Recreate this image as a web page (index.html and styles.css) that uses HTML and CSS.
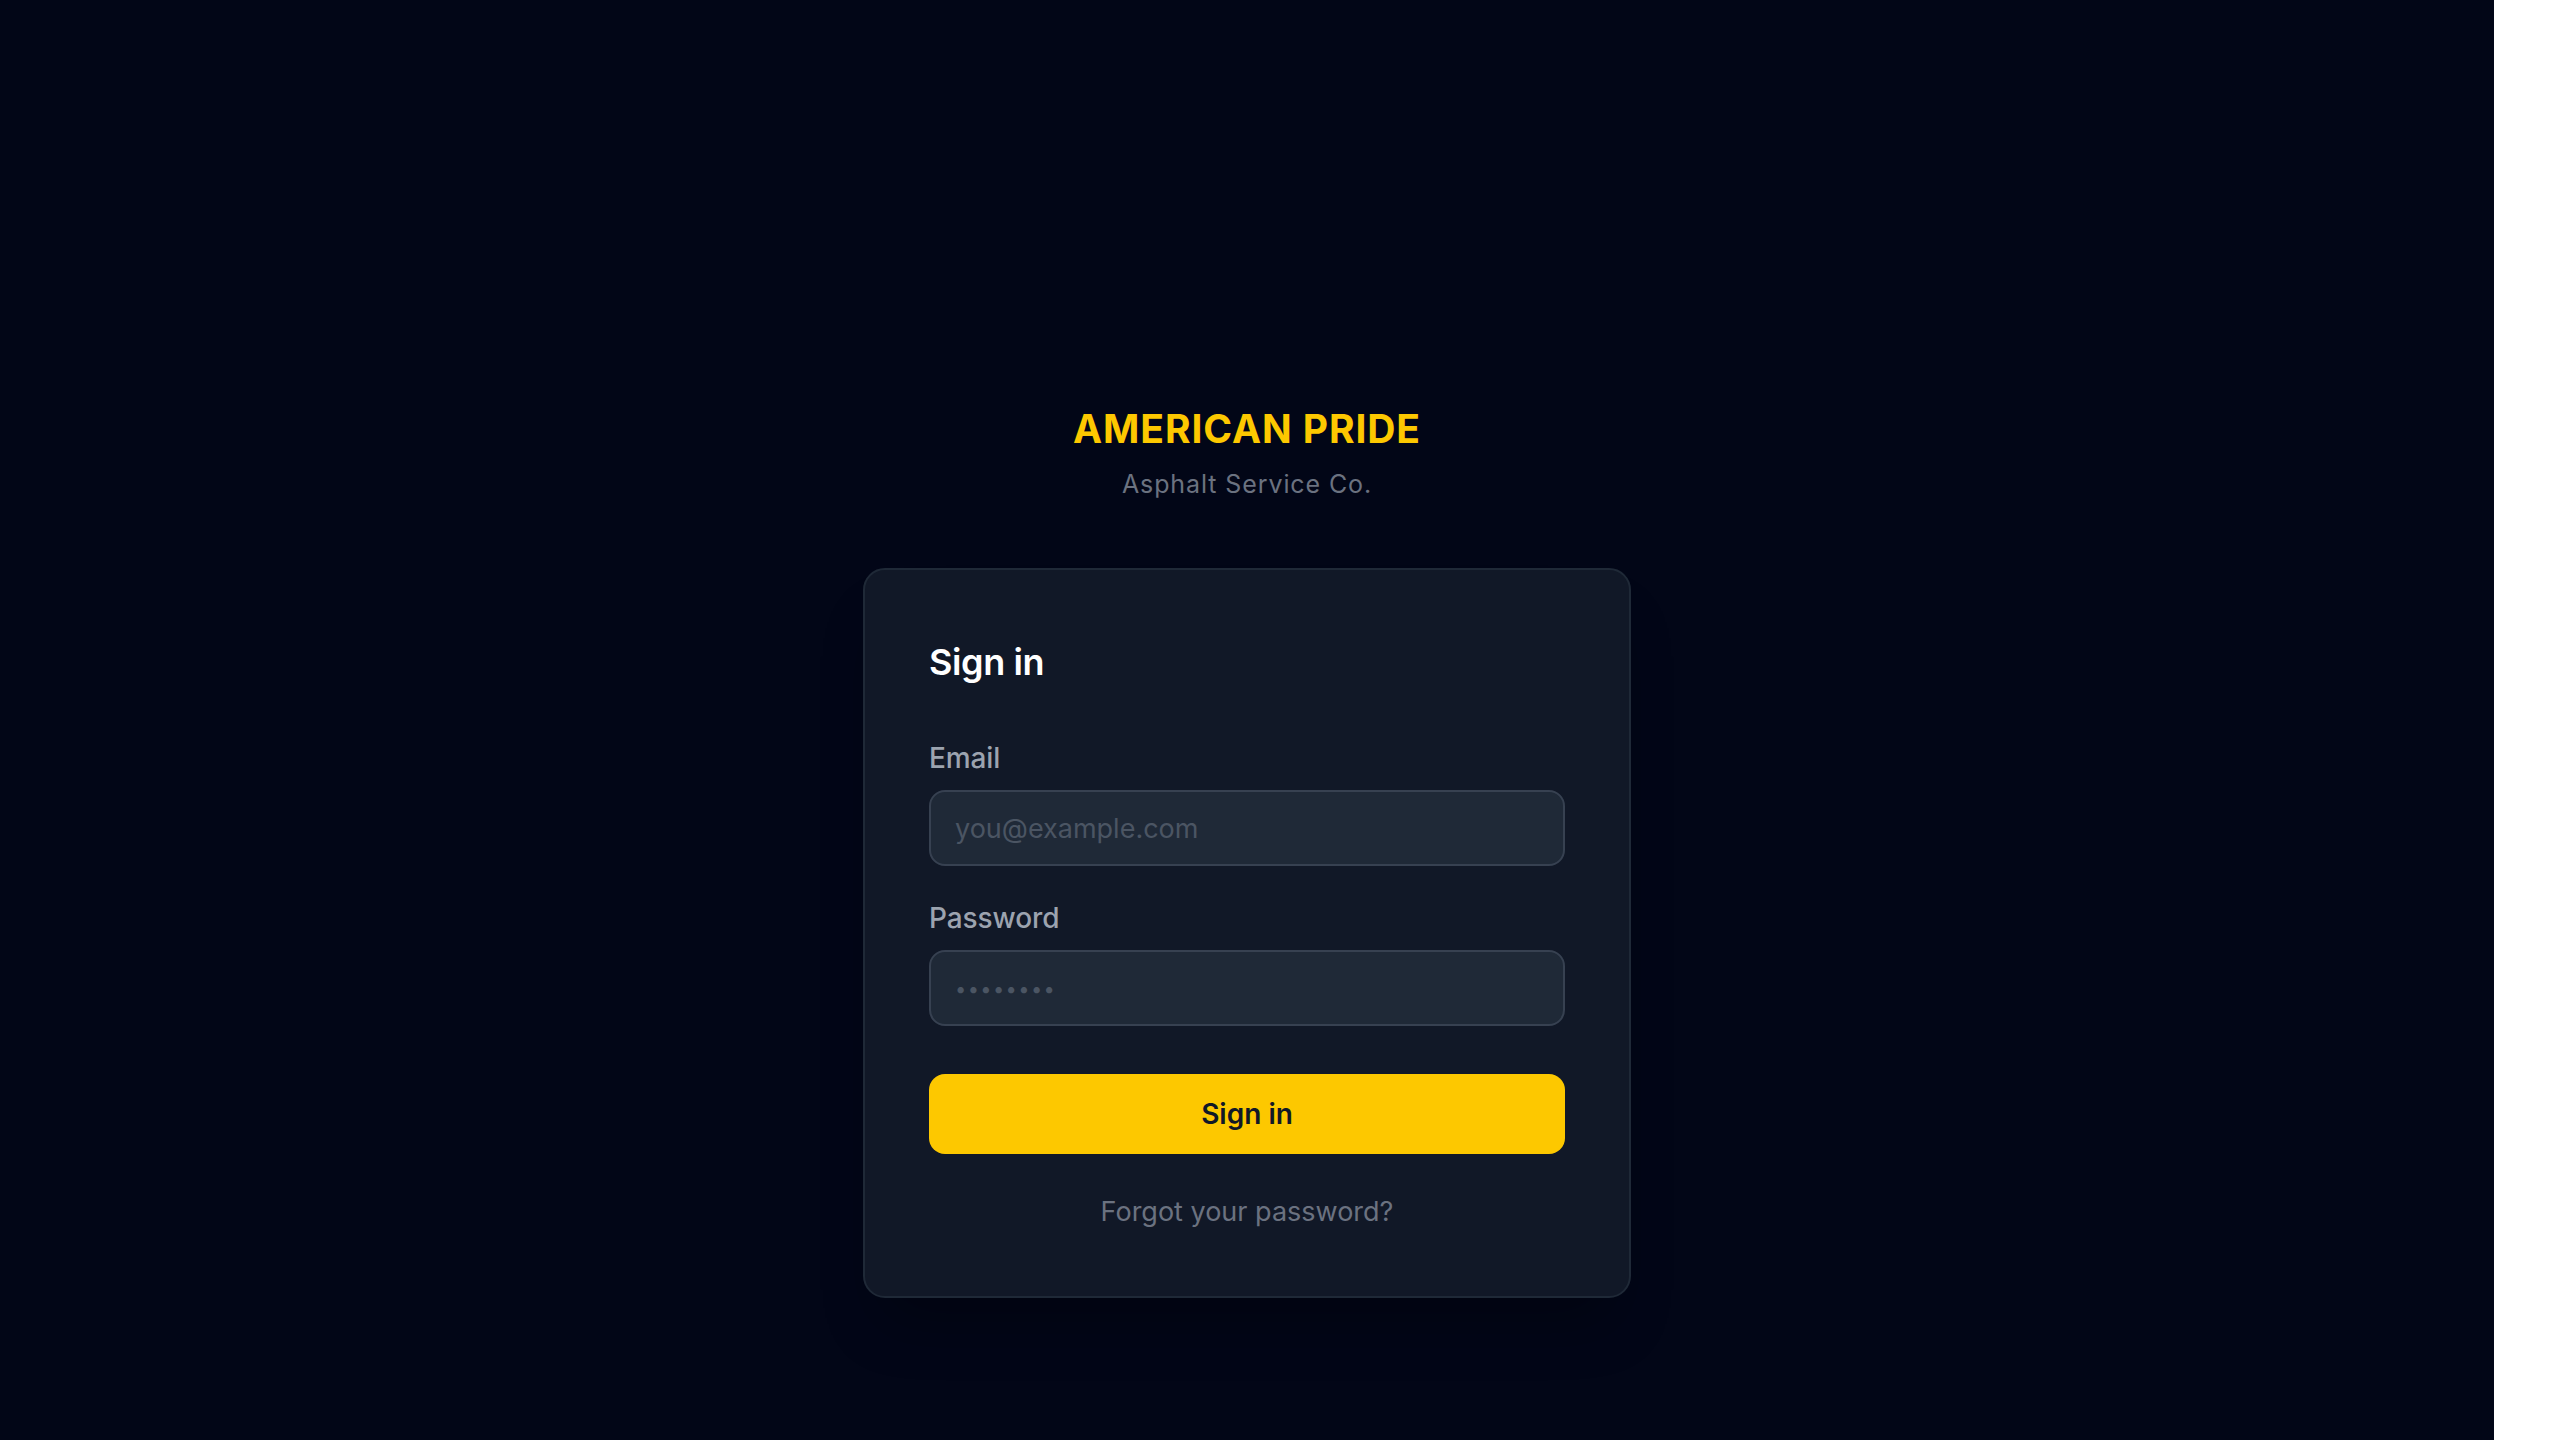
FILE: index.html
```html
<!DOCTYPE html>
<html lang="en">
<head>
<meta charset="utf-8">
<title>American Pride – Sign in</title>
<link rel="stylesheet" href="styles.css">
</head>
<body>
<div class="page">
  <main class="wrap">
    <header class="brand">
      <h1 class="brand-title">AMERICAN PRIDE</h1>
      <p class="brand-sub">Asphalt Service Co.</p>
    </header>
    <section class="card">
      <h2 class="card-title">Sign in</h2>
      <form class="form">
        <div class="field">
          <label class="label" for="email">Email</label>
          <input class="input" id="email" type="email" placeholder="you@example.com">
        </div>
        <div class="field">
          <label class="label" for="password">Password</label>
          <input class="input input-password" id="password" type="password" placeholder="••••••••">
        </div>
        <button class="btn" type="button">Sign in</button>
      </form>
      <div class="forgot-row"><a class="forgot" href="#">Forgot your password?</a></div>
    </section>
  </main>
</div>
</body>
</html>
```

FILE: styles.css
```css
html, body {
  margin: 0;
  padding: 0;
  background: #ffffff;
}
* { box-sizing: border-box; }

.page {
  width: 2494px;
  min-height: 1440px;
  background: #020617;
  font-family: Inter, "Noto Sans", "Liberation Sans", sans-serif;
  display: flex;
  justify-content: center;
  padding-top: 401px;
}

.wrap {
  width: 768px;
  display: flex;
  flex-direction: column;
  align-items: stretch;
}

.brand {
  text-align: center;
}
.brand-title {
  margin: 0;
  font-size: 39px;
  line-height: 56px;
  font-weight: 700;
  color: #fdc800;
  letter-spacing: 0.9px;
}
.brand-sub {
  margin: 11px 0 0;
  font-size: 25px;
  line-height: 32px;
  color: #6b7280;
  letter-spacing: 0.9px;
}

.card {
  margin-top: 68px;
  background: #111827;
  border: 2px solid #1f2937;
  border-radius: 22px;
  padding: 64px;
  box-shadow: 0 40px 60px -20px rgba(0, 0, 0, 0.3);
}

.card-title {
  margin: 0;
  font-size: 36px;
  line-height: 56px;
  font-weight: 600;
  color: #ffffff;
  letter-spacing: -0.4px;
}

.form {
  margin-top: 48px;
  display: flex;
  flex-direction: column;
  gap: 32px;
}

.field {
  display: flex;
  flex-direction: column;
  gap: 12px;
}

.label {
  font-size: 28px;
  line-height: 40px;
  font-weight: 500;
  color: #9ca3af;
  letter-spacing: -0.1px;
}

.input {
  height: 76px;
  width: 100%;
  padding: 0 24px;
  background: #1f2937;
  border: 2px solid #374151;
  border-radius: 16px;
  font-family: inherit;
  font-size: 27px;
  color: #e5e7eb;
  outline: none;
}
.input::placeholder {
  color: #4b5563;
}
.input-password {
  padding-bottom: 4px;
}
.input-password::placeholder {
  font-size: 20px;
  letter-spacing: 1.4px;
  color: #4b5563;
}

.btn {
  margin-top: 16px;
  height: 80px;
  width: 100%;
  border: 0;
  border-radius: 16px;
  background: #fdc800;
  color: #111827;
  font-family: inherit;
  font-size: 28px;
  font-weight: 600;
  cursor: pointer;
}

.forgot-row {
  margin-top: 38px;
  text-align: center;
  font-size: 27px;
  line-height: 40px;
}
.forgot {
  color: #6b7280;
  text-decoration: none;
}
```
